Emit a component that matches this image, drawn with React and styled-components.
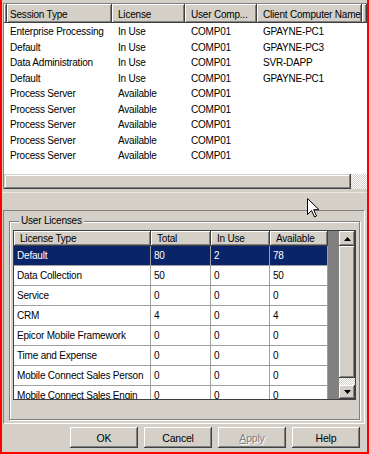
import React from 'react'
import styled, { createGlobalStyle } from 'styled-components'

const GlobalStyle = createGlobalStyle`
  body {
    margin: 0;
    font-family: "Liberation Sans", Arial, sans-serif;
    font-size: 10px;
    letter-spacing: -0.2px;
    background: #d4d0c8;
  }
`

const sessions = [
  ['Enterprise Processing', 'In Use', 'COMP01', 'GPAYNE-PC1'],
  ['Default', 'In Use', 'COMP01', 'GPAYNE-PC3'],
  ['Data Administration', 'In Use', 'COMP01', 'SVR-DAPP'],
  ['Default', 'In Use', 'COMP01', 'GPAYNE-PC1'],
  ['Process Server', 'Available', 'COMP01', ''],
  ['Process Server', 'Available', 'COMP01', ''],
  ['Process Server', 'Available', 'COMP01', ''],
  ['Process Server', 'Available', 'COMP01', ''],
  ['Process Server', 'Available', 'COMP01', ''],
]

const sessionCols = [
  { title: 'Session Type', w: 105, pad: 3 },
  { title: 'License', w: 73, pad: 6 },
  { title: 'User Comp...', w: 72, pad: 6 },
  { title: 'Client Computer Name', w: 105, pad: 6 },
]

const licenses = [
  ['Default', 80, 2, 78],
  ['Data Collection', 50, 0, 50],
  ['Service', 0, 0, 0],
  ['CRM', 4, 0, 4],
  ['Epicor Mobile Framework', 0, 0, 0],
  ['Time and Expense', 0, 0, 0],
  ['Mobile Connect Sales Person', 0, 0, 0],
  ['Mobile Connect Sales Engin', 0, 0, 0],
]

const licenseCols = [
  { title: 'License Type', w: 137 },
  { title: 'Total', w: 60 },
  { title: 'In Use', w: 59 },
  { title: 'Available', w: 58 },
]

const raised = `
  background: #d4d0c8;
  box-shadow: inset -1px -1px #404040, inset 1px 1px #fff, inset -2px -2px #808080;
`

const Frame = styled.div`
  position: relative;
  width: 369px;
  height: 454px;
  box-sizing: border-box;
  border: 2px solid #ff0000;
  border-top: 0;
  background: #d4d0c8;
  display: flex;
  flex-direction: column;
  overflow: hidden;
  color: #000;
`

const SessionList = styled.div`
  margin: 3px 0 0 1px;
  height: 186px;
  box-sizing: border-box;
  border-top: 1px solid #808080;
  border-left: 1px solid #808080;
  background: #fff;
  display: flex;
  flex-direction: column;
`

const ListHeader = styled.div`
  display: flex;
  height: 19px;
  flex-shrink: 0;
`

const HeaderCell = styled.div`
  ${raised}
  width: ${p => p.$w ? p.$w + 'px' : 'auto'};
  flex: ${p => p.$w ? 'none' : 1};
  box-sizing: border-box;
  padding: 4px 0 0 ${p => p.$pad || 0}px;
  line-height: 14px;
  white-space: nowrap;
  overflow: hidden;
`

const ListBody = styled.div`
  flex: 1;
  padding-top: 1px;
`

const ListRow = styled.div`
  display: flex;
  height: 15.5px;
  line-height: 15px;
  padding-left: 3px;
`

const ListCell = styled.div`
  width: ${p => p.$w}px;
  box-sizing: border-box;
  padding-left: ${p => p.$pad}px;
  white-space: nowrap;
`

const HScroll = styled.div`
  display: flex;
  height: 15px;
  flex-shrink: 0;
`

const Thumb = styled.div`
  flex: 1;
  background: #d4d0c8;
  box-shadow: inset -1px -1px #404040, inset 1px 1px #d4d0c8, inset -2px -2px #808080, inset 2px 2px #fff;
`

const Track = styled.div`
  width: ${p => p.$w || 16}px;
  height: ${p => p.$h ? p.$h + 'px' : 'auto'};
  background: repeating-conic-gradient(#fff 0 25%, #d4d0c8 0 50%) 0 0 / 2px 2px;
`

const Splitter = styled.div`
  height: 21px;
  flex-shrink: 0;
  box-shadow: inset 0 3px #d4d0c8, inset 0 4px #ece9e2;
`

const LicensePanel = styled.div`
  flex: 1;
  margin: 0 2px 0 1px;
  padding: 4px 4px 2px 5px;
  border: 1px solid;
  border-color: #808080 #fff #fff #808080;
`

const GroupBox = styled.fieldset`
  margin: 0;
  min-width: 0;
  padding: 3px 3px 19px 3px;
  border: 1px solid #808080;
  box-shadow: inset 1px 1px #fff, 1px 1px #fff;
`

const Legend = styled.legend`
  margin-left: 6px;
  padding: 0 2px;
  line-height: 12px;
  background: #d4d0c8;
`

const Grid = styled.div`
  display: flex;
  height: 170px;
  box-sizing: border-box;
  border: 1px solid #404040;
  background: #808080;
  overflow: hidden;
`

const GridMain = styled.div`
  width: 314px;
  flex-shrink: 0;
  display: flex;
  flex-direction: column;
`

const GridHeader = styled.div`
  display: flex;
  height: 15px;
  flex-shrink: 0;
`

const GridHeaderCell = styled.div`
  ${raised}
  width: ${p => p.$w}px;
  box-sizing: border-box;
  padding-left: 6px;
  line-height: 15px;
  white-space: nowrap;
`

const GridRow = styled.div`
  display: flex;
  height: 20px;
  flex-shrink: 0;
  box-sizing: border-box;
  border-bottom: 1px solid #a0a0a0;
  background: ${p => p.$selected ? '#0a246a' : '#fff'};
  color: ${p => p.$selected ? '#fff' : '#000'};
`

const GridCell = styled.div`
  width: ${p => p.$w}px;
  box-sizing: border-box;
  padding-left: 3px;
  line-height: 19px;
  border-right: 1px solid #a0a0a0;
  white-space: nowrap;
  overflow: hidden;
`

const GridFill = styled.div`
  flex: 1;
`

const VScroll = styled.div`
  width: 16px;
  flex-shrink: 0;
  display: flex;
  flex-direction: column;
  background: #d4d0c8;
`

const ScrollButton = styled.div`
  ${raised}
  height: ${p => p.$h}px;
  display: flex;
  align-items: center;
  justify-content: center;
  flex-shrink: 0;
`

const VThumb = styled.div`
  ${raised}
  flex: 1;
`

const ButtonBar = styled.div`
  display: flex;
  justify-content: flex-end;
  gap: 6px;
  padding: 3px 7px 4px 0;
`

const Button = styled.div`
  ${raised}
  width: 68px;
  height: 21px;
  display: flex;
  align-items: center;
  justify-content: center;
  font-size: 10.5px;
  color: ${p => p.$disabled ? '#808080' : '#000'};
  text-shadow: ${p => p.$disabled ? '1px 1px #fff' : 'none'};
  u { text-decoration-thickness: 1px; }
`

const Cursor = styled.svg`
  position: absolute;
  left: 305px;
  top: 198px;
`

const Arrow = ({ up }) => (
  <svg width="7" height="4" viewBox="0 0 7 4">
    <path d={up ? 'M3.5 0L7 4H0Z' : 'M0 0H7L3.5 4Z'} fill="#000" />
  </svg>
)

export default function App() {
  return (
    <>
      <GlobalStyle />
      <Frame>
        <SessionList>
          <ListHeader>
            <HeaderCell $w={3} />
            {sessionCols.map(c => (
              <HeaderCell key={c.title} $w={c.w} $pad={c.pad}>{c.title}</HeaderCell>
            ))}
            <HeaderCell />
          </ListHeader>
          <ListBody>
            {sessions.map((row, i) => (
              <ListRow key={i}>
                {row.map((v, j) => (
                  <ListCell key={j} $w={sessionCols[j].w} $pad={sessionCols[j].pad}>{v}</ListCell>
                ))}
              </ListRow>
            ))}
          </ListBody>
          <HScroll>
            <Thumb />
            <Track />
          </HScroll>
        </SessionList>
        <Splitter />
        <LicensePanel>
          <GroupBox>
            <Legend>User Licenses</Legend>
            <Grid>
              <GridMain>
                <GridHeader>
                  {licenseCols.map(c => (
                    <GridHeaderCell key={c.title} $w={c.w}>{c.title}</GridHeaderCell>
                  ))}
                </GridHeader>
                {licenses.map((row, i) => (
                  <GridRow key={i} $selected={i === 0}>
                    {row.map((v, j) => (
                      <GridCell key={j} $w={licenseCols[j].w}>{v}</GridCell>
                    ))}
                  </GridRow>
                ))}
              </GridMain>
              <GridFill />
              <VScroll>
                <ScrollButton $h={15}><Arrow up /></ScrollButton>
                <VThumb />
                <Track $w={16} $h={7} />
                <ScrollButton $h={14}><Arrow /></ScrollButton>
              </VScroll>
            </Grid>
          </GroupBox>
        </LicensePanel>
        <ButtonBar>
          <Button>OK</Button>
          <Button>Cancel</Button>
          <Button $disabled><span><u>A</u>pply</span></Button>
          <Button>Help</Button>
        </ButtonBar>
        <Cursor width="13" height="20" viewBox="0 0 13 20">
          <path d="M0.5 0.5V16.5L4.5 12.5L7.5 19L9.5 18L6.7 11.7H12Z" fill="#fff" stroke="#000" strokeWidth="1" />
        </Cursor>
      </Frame>
    </>
  )
}
